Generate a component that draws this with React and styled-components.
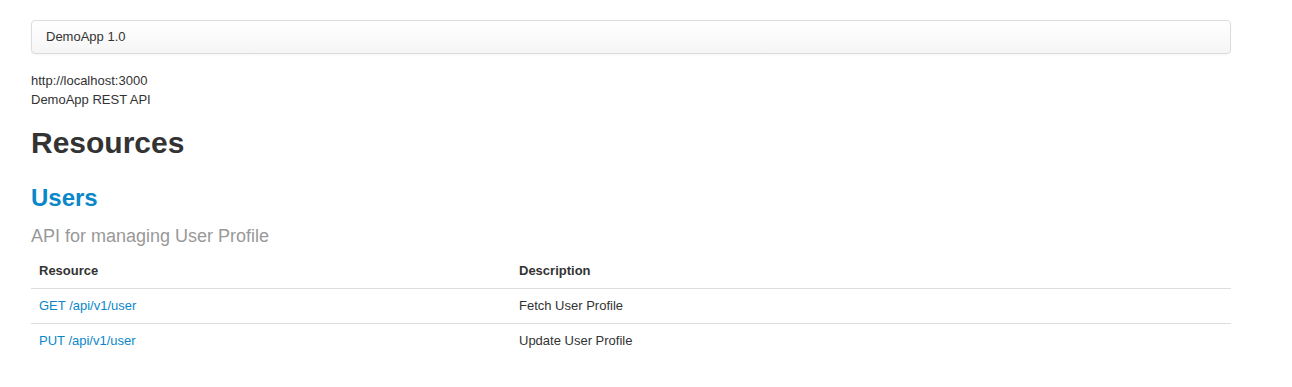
import React from "react";
import styled, { createGlobalStyle } from "styled-components";

const Global = createGlobalStyle`
  html, body { margin: 0; padding: 0; background: #fff; }
  body {
    font-family: "Liberation Sans", Arial, Helvetica, sans-serif;
    font-size: 13px;
    line-height: 1.428571;
    color: #333;
  }
`;

const Page = styled.div`
  width: 1200px;
  padding: 20px 0 0 31px;
`;

const TopBar = styled.div`
  box-sizing: border-box;
  height: 34px;
  padding: 0 14px;
  display: flex;
  align-items: center;
  border: 1px solid #dcdcdc;
  border-radius: 4px;
  background: linear-gradient(to bottom, #ffffff 0%, #f5f5f5 100%);
  box-shadow: 0 1px 2px rgba(0, 0, 0, 0.04);
  font-size: 13px;
  color: #333;
`;

const Info = styled.div`
  margin-top: 18px;
`;

const InfoLine = styled.div`
  line-height: 18.57px;
`;

const Title = styled.h2`
  margin: 17px 0 0;
  font-size: 30px;
  font-weight: 700;
  line-height: 33px;
  color: #333;
`;

const Section = styled.h3`
  margin: 26px 0 0;
  font-size: 24px;
  font-weight: 700;
  line-height: 26px;
  color: #0a87c9;
`;

const Subtitle = styled.p`
  margin: 15px 0 0;
  font-size: 18px;
  line-height: 20px;
  color: #999;
`;

const Table = styled.table`
  width: 100%;
  margin-top: 8px;
  border-collapse: collapse;
  border-spacing: 0;
`;

const Th = styled.th`
  text-align: left;
  font-weight: 700;
  padding: 8px 8px 7px;
  line-height: 18.57px;
  border-bottom: 1px solid #ddd;
  width: ${(p) => p.$w};
`;

const Td = styled.td`
  padding: 8px;
  line-height: 18.57px;
  border-top: ${(p) => (p.$first ? "none" : "1px solid #ddd")};
`;

const Link = styled.a`
  color: #0a87c9;
  text-decoration: none;
`;

const rows = [
  { method: "GET", path: "/api/v1/user", desc: "Fetch User Profile" },
  { method: "PUT", path: "/api/v1/user", desc: "Update User Profile" },
];

export default function App() {
  return (
    <>
      <Global />
      <Page>
        <TopBar>DemoApp 1.0</TopBar>
        <Info>
          <InfoLine>http://localhost:3000</InfoLine>
          <InfoLine>DemoApp REST API</InfoLine>
        </Info>
        <Title>Resources</Title>
        <Section>Users</Section>
        <Subtitle>API for managing User Profile</Subtitle>
        <Table>
          <thead>
            <tr>
              <Th $w="40%">Resource</Th>
              <Th $w="60%">Description</Th>
            </tr>
          </thead>
          <tbody>
            {rows.map((r, i) => (
              <tr key={r.method}>
                <Td $first={i === 0}>
                  <Link href="#">
                    {r.method} {r.path}
                  </Link>
                </Td>
                <Td $first={i === 0}>{r.desc}</Td>
              </tr>
            ))}
          </tbody>
        </Table>
      </Page>
    </>
  );
}
